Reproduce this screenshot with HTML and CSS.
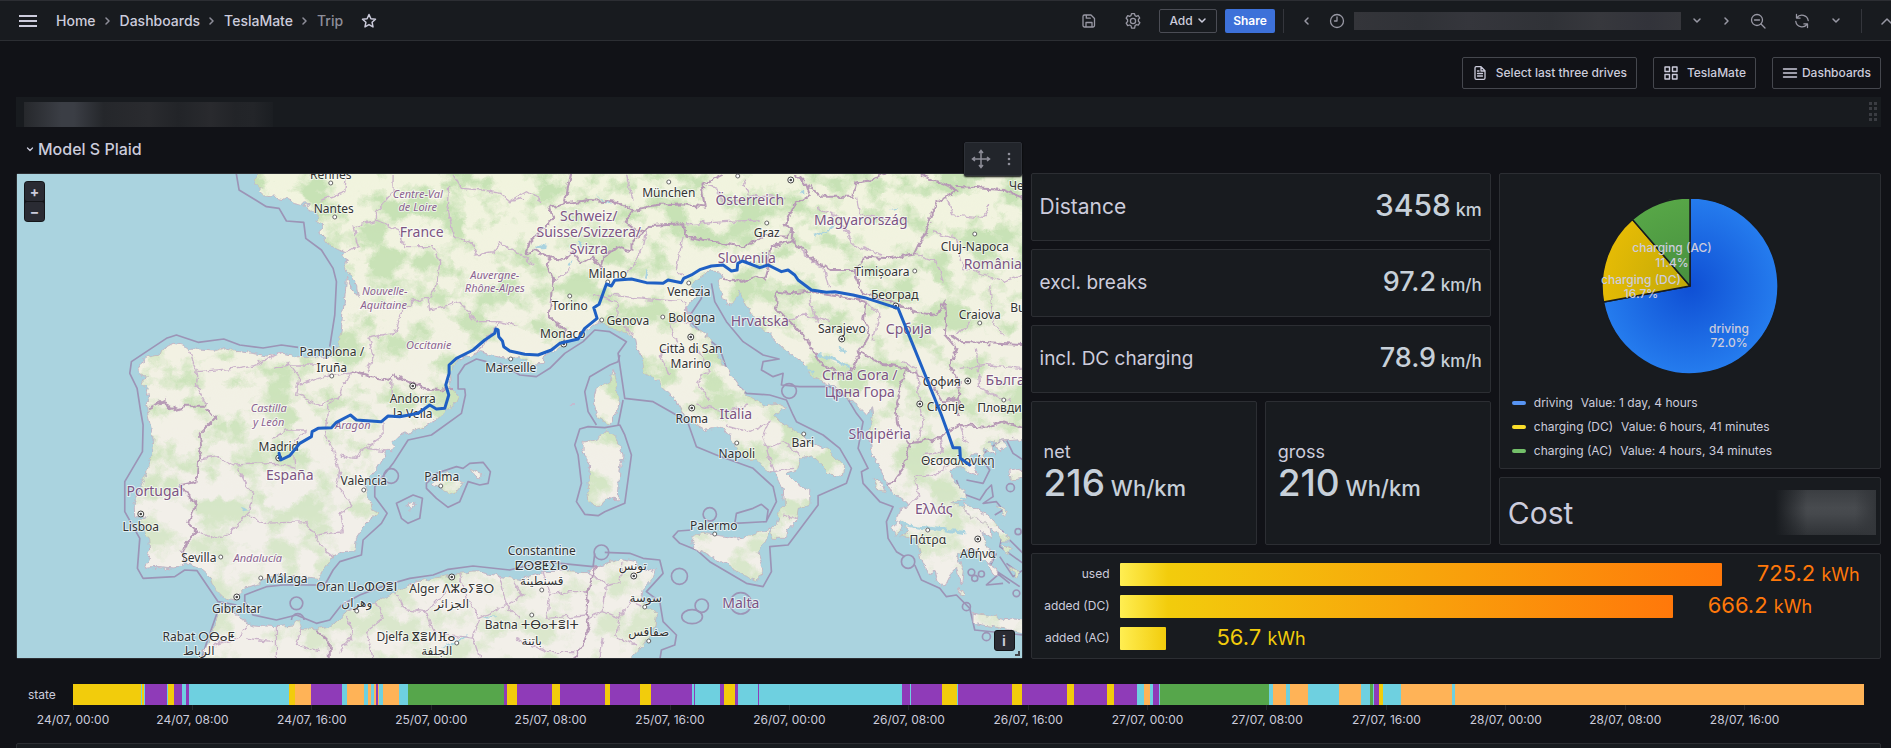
FILE: index.html
```html
<!DOCTYPE html>
<html lang="en">
<head>
<meta charset="utf-8">
<title>Trip - TeslaMate - Dashboards</title>
<link rel="stylesheet" href="styles.css">
</head>
<body>
<header class="topbar">
  <button class="icon-btn menu-btn" aria-label="Open menu"><svg width="20" height="14" viewBox="0 0 20 14"><path d="M1 2h18M1 7h18M1 12h18" stroke-width="2"/></svg></button>
  <nav class="crumbs" aria-label="Breadcrumbs">
    <a href="#">Home</a><svg class="sep" width="6" height="10" viewBox="0 0 6 10"><path d="M1 2l3 3-3 3" stroke-width="1.500"/></svg>
    <a href="#">Dashboards</a><svg class="sep" width="6" height="10" viewBox="0 0 6 10"><path d="M1 2l3 3-3 3" stroke-width="1.500"/></svg>
    <a href="#">TeslaMate</a><svg class="sep" width="6" height="10" viewBox="0 0 6 10"><path d="M1 2l3 3-3 3" stroke-width="1.500"/></svg>
    <span class="current">Trip</span>
  </nav>
  <button class="icon-btn star-btn" aria-label="Mark as favorite"><svg width="16" height="16" viewBox="0 0 16 16"><path d="M8 1.5l1.9 4.2 4.6.5-3.4 3.1.9 4.6L8 11.6l-4 2.3.9-4.6L1.500 6.200l4.600-.5z" stroke-width="1.500"/></svg></button>
  <div class="tools">
    <button class="icon-btn tool" aria-label="Save dashboard"><svg width="16" height="16" viewBox="0 0 16 16"><path d="M3.500 2h6.500l3.500 3.500v7a1.500 1.500 0 0 1-1.500 1.500H3.500A1.500 1.500 0 0 1 2 12.500v-9A1.500 1.500 0 0 1 3.500 2zM5.300 2v3.200h4M5 14v-4.500h6V14" stroke-width="1.300"/></svg></button>
    <button class="icon-btn tool" aria-label="Dashboard settings"><svg width="18" height="18" viewBox="0 0 18 18"><circle cx="9" cy="9" r="2.600" stroke-width="1.300"/><path stroke-width="1.300" d="M7.500 1.700h3l.5 2 1.300.600 1.900-.8 1.500 2.500-1.300 1.400v1.900l1.500 1.400-1.600 2.500-2-.5-1.200.9-.5 2.600h-3l-.6-2.500-1.300-.7-2 .6-1.500-2.500 1.400-1.600V7.700L2.200 6.200l1.500-2.500 1.900.700 1.400-.7z"/></svg></button>
    <button class="add-btn">Add <svg width="10" height="8" viewBox="0 0 10 8"><path d="M2 2l3 3 3-3" stroke-width="1.500"/></svg></button>
    <button class="share-btn">Share</button>
    <span class="divider"></span>
    <button class="icon-btn narrow" aria-label="Move time range back"><svg width="8" height="12" viewBox="0 0 8 12"><path d="M6 3L3 6l3 3" stroke-width="1.500"/></svg></button>
    <button class="range-btn" aria-label="Time range"><svg width="16" height="16" viewBox="0 0 16 16"><circle cx="8" cy="8" r="6.500" stroke-width="1.300"/><path d="M8 4v4H5.500" stroke-width="1.300"/></svg><span class="redacted-range"></span><svg width="10" height="8" viewBox="0 0 10 8"><path d="M2 2l3 3 3-3" stroke-width="1.500"/></svg></button>
    <button class="icon-btn narrow" aria-label="Move time range forward"><svg width="8" height="12" viewBox="0 0 8 12"><path d="M2 3l3 3-3 3" stroke-width="1.500"/></svg></button>
    <button class="icon-btn zoom-out" aria-label="Zoom out time range"><svg width="16" height="16" viewBox="0 0 16 16"><circle cx="7" cy="7" r="5.500" stroke-width="1.300"/><path d="M4.500 7h5M11 11l4 4" stroke-width="1.300"/></svg></button>
    <button class="icon-btn refresh" aria-label="Refresh"><svg width="16" height="16" viewBox="0 0 16 16"><path d="M2.800 4.800A6.300 6.300 0 0 1 14.200 7.500M13.200 11.200A6.300 6.300 0 0 1 1.800 8.500M2.500 1.500v3.600h3.600M13.500 14.500v-3.600h-3.600" stroke-width="1.300"/></svg></button>
    <button class="icon-btn interval" aria-label="Refresh interval"><svg width="10" height="8" viewBox="0 0 10 8"><path d="M2 2l3 3 3-3" stroke-width="1.500"/></svg></button>
    <span class="divider"></span>
    <button class="icon-btn collapse" aria-label="Hide top bar"><svg width="12" height="10" viewBox="0 0 12 10"><path d="M1 8l5-5 5 5" stroke-width="1.500"/></svg></button>
  </div>
</header>

<main class="page">
  <nav class="dash-links" aria-label="Dashboard links">
    <a class="dash-link" href="#"><svg width="16" height="16" viewBox="0 0 16 16"><path d="M4 1.700h5L13 5.700v7.300a1.300 1.300 0 0 1-1.300 1.300H4.300A1.300 1.300 0 0 1 3 13V3a1.300 1.300 0 0 1 1-1.300zM9 2v4h4M5.500 8.500h5M5.500 11h5M5.500 6h1.500" stroke-width="1.300"/></svg>Select last three drives</a>
    <a class="dash-link" href="#"><svg width="16" height="16" viewBox="0 0 16 16"><path d="M2 2h4.500v4.500H2zM9.500 2H14v4.500H9.500zM2 9.500h4.500V14H2zM9.500 9.500H14V14H9.500z" stroke-width="1.400"/></svg>TeslaMate</a>
    <a class="dash-link tight" href="#"><svg width="16" height="16" viewBox="0 0 16 16"><path d="M1.500 4h13M1.500 8h13M1.500 12h13" stroke-width="1.400"/></svg>Dashboards</a>
  </nav>

  <div class="var-row">
    <span class="redacted-var"></span>
    <svg class="grip" width="10" height="20" viewBox="0 0 10 20"><path d="M1 0h3v3H1zM6 0h3v3H6zM1 5h3v3H1zM6 5h3v3H6zM1 11h3v3H1zM6 11h3v3H6zM1 16h3v3H1zM6 16h3v3H6z"/></svg>
  </div>

  <div class="grid">
    <h1 class="row-title"><button><svg width="8" height="8" viewBox="0 0 8 8"><path d="M1.500 3L4 5.500 6.500 3" stroke-width="1.300"/></svg>Model S Plaid</button></h1>

    <section class="panel map-panel" aria-label="Trip map">
      <svg class="map" viewBox="17 174 1005 484" preserveAspectRatio="xMidYMid slice">
        <defs>
          <filter id="rough" filterUnits="userSpaceOnUse" x="10" y="165" width="1020" height="500">
            <feTurbulence type="fractalNoise" baseFrequency="0.13" numOctaves="3" seed="4" result="n"/>
            <feDisplacementMap in="SourceGraphic" in2="n" scale="7" xChannelSelector="R" yChannelSelector="G"/>
          </filter>
          <filter id="forest" filterUnits="userSpaceOnUse" x="10" y="165" width="1020" height="500" color-interpolation-filters="sRGB">
            <feTurbulence type="fractalNoise" baseFrequency="0.03 0.036" numOctaves="6" seed="12"/>
            <feColorMatrix values="0 0 0 0 0.77  0 0 0 0 0.88  0 0 0 0 0.70  5 0 0 0 -2.300"/>
          </filter>
          <linearGradient id="soil" gradientUnits="userSpaceOnUse" x1="0" y1="520" x2="0" y2="1500">
            <stop offset="0" stop-color="#f1f4de"/><stop offset=".55" stop-color="#f2f1e3"/><stop offset="1" stop-color="#f2efe9"/>
          </linearGradient>
          <linearGradient id="fade" gradientUnits="userSpaceOnUse" x1="0" y1="520" x2="0" y2="1975">
            <stop offset="0" stop-color="#f4f4f4"/><stop offset=".45" stop-color="#d0d0d0"/><stop offset=".75" stop-color="#909090"/><stop offset="1" stop-color="#808080"/>
          </linearGradient>
          <g id="land">
            <path d="M795 500L768 540 765 557 785 560 775 573 790 587 830 592 860 598 885 608 905 613 935 610 915 620 935 630 960 650 945 660 968 675 960 695 985 730 1010 745 1035 755 1030 770 1040 785 1035 805 1045 817 1070 855 1076 892 1060 870 1040 835 1037 875 1030 935 1025 985 1015 1045 985 1073 940 1070 895 1070 850 1060 800 1068 760 1060 715 1055 675 1043 650 1051 600 1047 565 1048 550 1035 520 1030 488 1047 480 1065 445 1073 415 1095 420 1120 440 1130 430 1150 445 1165 440 1185 455 1185 440 1207 440 1215 447 1255 460 1315 455 1365 435 1435 410 1490 400 1515 402 1545 418 1552 425 1535 440 1555 420 1565 440 1600 447 1615 450 1655 437 1705 470 1702 520 1707 555 1685 590 1695 630 1730 640 1760 670 1790 700 1800 712 1790 735 1765 780 1750 830 1725 900 1730 955 1735 975 1705 1000 1670 1030 1655 1065 1652 1070 1615 1100 1570 1140 1540 1115 1525 1100 1475 1095 1455 1130 1405 1160 1355 1185 1340 1180 1325 1200 1305 1260 1285 1310 1260 1335 1235 1365 1215 1375 1190 1355 1165 1352 1115 1365 1090 1400 1070 1440 1055 1480 1067 1520 1075 1560 1070 1590 1093 1630 1090 1635 1067 1670 1045 1690 1035 1730 1017 1750 995 1775 977 1800 965 1830 985 1880 995 1905 1015 1910 1045 1925 1075 1930 1115 1970 1140 2010 1180 2030 1205 2060 1255 2120 1290 2170 1280 2195 1315 2230 1375 2270 1380 2300 1410 2330 1420 2350 1465 2355 1515 2335 1545 2330 1575 2315 1595 2320 1615 2360 1615 2365 1590 2390 1560 2395 1525 2430 1515 2430 1470 2390 1450 2360 1420 2390 1410 2400 1375 2435 1365 2470 1395 2500 1425 2530 1430 2535 1400 2490 1355 2430 1325 2400 1305 2340 1265 2320 1245 2360 1225 2330 1210 2290 1215 2230 1175 2180 1105 2140 1045 2120 1005 2075 975 2060 925 2090 885 2075 855 2100 835 2130 815 2165 820 2170 835 2155 845 2170 895 2185 920 2205 905 2220 870 2230 895 2250 935 2280 980 2320 1015 2360 1055 2410 1085 2430 1125 2470 1145 2510 1165 2560 1205 2590 1235 2600 1245 2615 1220 2620 1255 2605 1305 2615 1365 2645 1415 2660 1445 2680 1480 2720 1505 2730 1520 2700 1525 2690 1560 2710 1570 2730 1590 2700 1610 2750 1615 2770 1690 2790 1725 2805 1710 2815 1745 2835 1760 2855 1720 2870 1705 2885 1755 2890 1715 2875 1665 2900 1645 2930 1655 2970 1695 2980 1675 2960 1625 2940 1590 2975 1615 2970 1575 2920 1545 2880 1515 2850 1510 2900 1500 2895 1480 2870 1455 2850 1415 2875 1395 2900 1415 2935 1425 2910 1370 2930 1360 2960 1385 2950 1345 2990 1365 2975 1335 2960 1330 3010 1320 3080 1315 3080 500z"/>
            <path d="M600 1985L630 1915 650 1865 660 1840 690 1830 712 1840 725 1860 760 1875 830 1880 880 1875 900 1860 905 1885 950 1890 990 1880 1040 1835 1080 1820 1130 1805 1190 1775 1230 1755 1300 1735 1380 1720 1440 1715 1500 1730 1560 1738 1630 1715 1710 1713 1760 1715 1800 1695 1870 1677 1910 1685 1915 1705 1940 1715 1970 1705 1960 1735 1930 1765 1925 1795 1940 1825 1970 1840 1965 1875 1950 1905 1930 1935 1890 1985z"/>
            <path d="M1750 1330L1790 1320 1820 1290 1850 1310 1870 1365 1860 1415 1855 1500 1820 1495 1795 1520 1770 1505 1765 1445 1770 1395 1750 1355z"/>
            <path d="M1840 1105L1848 1135 1855 1195 1850 1235 1825 1275 1795 1255 1780 1205 1790 1165 1835 1145z"/>
            <path d="M2075 1615L2110 1600 2150 1605 2210 1615 2270 1600 2315 1587 2295 1625 2275 1655 2290 1705 2275 1740 2230 1725 2190 1700 2130 1665 2080 1645z"/>
            <path d="M2920 1840L2960 1845 3010 1855 3080 1860 3080 1900 3010 1885 2920 1870z"/>
            <path d="M1295 1450L1340 1420 1387 1450 1360 1485 1320 1465zM1412 1408L1450 1425 1442 1437 1418 1422zM1218 1515L1246 1503 1236 1530zM2620 1438l25 10 12 30-18-8zM2675 1580l22-20 10 30-20 15zM2900 1510l80 50 50 60-20 0-60-55-60-30zM2985 1330l30-10 5 20-22 15zM3030 1410l30-5 10 30-35 5zM2990 1515l30 20-10 12zM3005 1630l30 20-15 14zM2960 1690l25 10 10 25-15-5zM3030 1700l28 14-8 20zM2880 1765l12 20-12 5z"/>
          </g>
          <mask id="landMask" maskUnits="userSpaceOnUse" x="10" y="165" width="1020" height="500"><use href="#land" transform="scale(.33333)" fill="url(#fade)"/></mask>
          <g id="capital"><circle r="3" fill="#fff" stroke="#444" stroke-width="1"/><circle r="1.300" fill="#444"/></g>
          <circle id="town" r="2" fill="#fff" stroke="#666" stroke-width="1"/>
        </defs>
        <rect x="0" y="160" width="1100" height="520" fill="#aad3df"/>

        <g class="sea-lines" transform="scale(.33333)">
          <path d="M706 500L718 570 800 620 838 625 860 663 912 667 918 715 965 750 1000 805 1010 845 1005 945 990 1040M895 1042L845 1035 790 1044 720 1035 672 1017 595 1027 530 1005 500 1015 440 1055 395 1085 390 1120 412 1165 422 1230 430 1275 428 1355 375 1445 375 1535 420 1615 413 1705 430 1735 525 1730 555 1710 592 1712 655 1805 710 1815M655 1830L620 1930 605 1980"/>
          <path d="M1460 1085L1430 1077 1395 1095 1375 1125 1375 1167 1395 1167 1397 1185 1385 1240 1295 1305 1225 1320 1180 1390 1125 1460 1125 1490 1162 1540 1145 1570 1090 1620 1085 1665 1020 1685 1000 1710 975 1755 850 1755 800 1760 735 1785 735 1805 760 1845 830 1860 890 1845 950 1870 990 1860 1025 1815 1080 1785 1160 1755 1230 1735 1300 1725 1345 1708 1420 1698 1530 1710 1630 1685 1780 1700 1785 1660M1815 1657L1890 1660 1930 1675 1980 1680 1990 1720 1940 1775 1980 1805 1990 1865 2030 1905 2025 1935 1985 1950 1980 1980"/>
          <path d="M1500 1090L1560 1125 1610 1130 1650 1105 1695 1060 1750 1025 1785 990 1830 995 1880 1025 1855 1060 1875 1195 1960 1205 2030 1245 2065 1270 2090 1340 2150 1365 2260 1405 2320 1460 2330 1505 2300 1563M2380 1245L2360 1200 2310 1185 2240 1180 2190 1135 2160 1045 2105 1000 2065 955 2105 895 2105 865M2380 1245L2390 1265 2470 1305 2520 1345 2555 1405 2540 1450 2455 1487 2455 1515 2365 1635 2310 1640 2315 1715 2290 1760 2240 1750 2130 1685 2090 1650 2040 1630 2020 1610 2035 1593 2075 1590M2300 1565L2205 1570 2210 1540 2260 1525 2285 1513 2305 1530z"/>
          <path d="M2135 850L2145 905 2180 965 2230 1025 2290 1065 2338 1077 2290 1085 2285 1110 2320 1130 2350 1120 2345 1155 2400 1160 2490 1160 2540 1190 2570 1240 2590 1265 2575 1345 2605 1405 2585 1415 2590 1450 2640 1505 2680 1520 2660 1565 2665 1615 2690 1655 2715 1670M2745 1695L2765 1740 2820 1765 2840 1790 2870 1785 2910 1825 2925 1890 3070 1905M1765 1280L1815 1283 1860 1275 1875 1305 1895 1365 1875 1510 1815 1535 1795 1547 1755 1543 1730 1505 1745 1450 1735 1365 1725 1335 1740 1287zM1790 1275L1765 1235 1755 1175 1770 1130 1830 1095 1855 1085 1860 1065M1855 1275L1870 1200"/>
          <path d="M1280 1450L1310 1420 1370 1400 1390 1405 1410 1390 1450 1387 1472 1415 1465 1450 1440 1455 1405 1445 1380 1505 1345 1522 1310 1495 1280 1465zM1190 1510L1240 1485 1268 1495 1260 1555 1225 1570 1205 1555zM2870 1440L2885 1480 2940 1500 2960 1470 2975 1455 2980 1490 2950 1510 2990 1505 3010 1530 2985 1545M2900 1440L2950 1450 2970 1410 2940 1370 2990 1330 3020 1320 3040 1360 3070 1380M2950 1560L3010 1595 3000 1640 3070 1690M2990 1660L2970 1700 3060 1760M3010 1750L2960 1755 3000 1720M3030 1620L3070 1660M3000 1670l40 60 30-20M2980 1710l50 40M3020 1690l40 30"/>
          <circle cx="890" cy="1810" r="19"/><path d="M875 1860a19 19 0 0 1 38 0"/><circle cx="1174" cy="1428" r="22"/><circle cx="2130" cy="1543" r="20"/><circle cx="2039" cy="1729" r="24"/><circle cx="2106" cy="1817" r="20"/><ellipse cx="2077" cy="1850" rx="31" ry="21"/><circle cx="2223" cy="1810" r="32"/><circle cx="1805" cy="1657" r="22"/><circle cx="2725" cy="1685" r="20"/><circle cx="2368" cy="1173" r="22"/><circle cx="2915" cy="1717" r="10"/><circle cx="2945" cy="1722" r="9"/><circle cx="2900" cy="1820" r="12"/><circle cx="2960" cy="1910" r="12"/><circle cx="3055" cy="1595" r="9"/><circle cx="3032" cy="1463" r="12"/><circle cx="3050" cy="1780" r="10"/><circle cx="2925" cy="1735" r="9"/>
        </g>

        <g filter="url(#rough)">
          <use href="#land" transform="scale(.33333)" fill="url(#soil)" stroke="#c3b4c4" stroke-width="3"/>
          <g mask="url(#landMask)"><rect x="10" y="165" width="1020" height="500" filter="url(#forest)"/></g>
          <g class="lakes" transform="scale(.33333)">
            <path d="M2440 705l40-14 24-18-10 16-50 22zM1600 745l25-12 18 4-12 8zM1790 585l44 26-10 2zM2670 630l25-12-4 8zM1935 838l6-30 8 2-8 30zM1700 795l22-18-12 20zM1735 722l14 4-8 12zM2400 580l12-16 2 14zM1330 1940l60-30 20-5-60 36zM1450 1852l40-4-20 8zM720 1520l30 10-20 4z"/>
            <path d="M2700 1570L2760 1582 2840 1590 2900 1598" fill="none" stroke="#aad3df" stroke-width="9"/>
            <path d="M2880 1490l70 30 60 50M2520 1040l20 18M2450 1060l60 22 40 24M2360 1060l80 60" fill="none" stroke="#aad3df" stroke-width="7"/>
          </g>
          <g class="region-lines" transform="scale(.33333)">
            <g transform="translate(0 495)">
              <path d="M1180 30V80L1130 140V165L1195 195 1215 245 1300 245 1320 290 1310 370 1285 400 1290 435 1340 425 1375 410 1430 470 1500 470 1560 485M1350 60L1345 130 1360 210 1420 240 1430 270 1480 260 1500 235 1560 265M1130 165L1060 185 1075 245 1035 260M1285 400L1240 405 1200 450 1190 500 1105 520 1120 570 1100 625M1360 30L1385 70 1450 75 1500 85 1530 110 1570 100M1040 30L1035 80 965 105M1430 560L1460 530 1500 470M1560 265L1600 300"/>
              <path d="M570 560L585 600 595 620 590 660 620 720M595 620L700 610 760 600 840 565M820 610L870 595 900 640 890 690 960 720 1000 700M900 660L960 640 1050 618 1015 700 985 720M1175 640L1180 720M880 600L960 600"/>
            </g>
            <g transform="translate(0 1215)">
              <path d="M600 165L650 155 700 180 830 175 885 190 880 110 920 75M820 100L860 75 920 75M715 190L740 240 760 260 750 320 740 330 690 385 660 400 590 380M740 330L790 355 920 350 950 400 980 440 1000 455M1000 130L1020 200 1010 240 1060 300 1020 330 1030 380 950 390M985 0L975 90 1000 130M1150 50V90L1100 130 1060 160 1020 150M1100 130L1180 140"/>
              <path d="M830 665L830 760M740 660L720 700 640 720M740 700L820 710M905 670L890 720 960 740M1040 630L1060 690 1020 740M1130 590L1150 640 1100 680 1120 760M1190 560L1210 610 1280 620 1340 560M1280 620L1300 680 1420 700 1440 640 1400 580 1380 505M1440 640L1520 600M1420 700L1440 760M1500 515L1520 600 1560 640"/>
            </g>
            <g transform="translate(1530 405)">
              <path d="M130 440L180 400M300 480L400 490 520 500M250 480L320 500 330 560M330 560L370 600M410 290L400 340 350 420M520 305L500 400 530 430M520 500L560 560 480 560M480 560L500 620 450 660 480 720M560 640L600 700 560 740 600 800M350 120L370 200M0 200L50 170 100 200M580 150L620 160 640 200 700 200M530 270L640 260 750 255M700 140L720 180 830 190M870 350L940 400 960 460M1000 270L1030 330 1120 360M920 220L980 240 1000 270M1040 185L1050 240 1200 260M1310 185L1330 240 1420 250 1440 210M1270 290L1340 310 1360 400 1480 440 1536 420M1215 355L1280 380 1300 440M1380 560L1340 600M1440 450L1450 560 1480 600M1070 500L1110 540 1090 620M1180 680L1220 700 1230 800M820 560L880 540 960 560M900 480L920 560M1350 700L1440 690 1536 700M1400 640L1410 760 1500 800"/>
            </g>
            <g transform="translate(1530 1215)">
              <path d="M560 0L640 20 720 0M650 60L720 80 780 50 760 100 770 130 820 110 870 150M770 130L790 200 850 190M820 330L860 345M1230 0L1240 60 1220 110M1210 215L1270 210 1320 180M1290 90L1300 140 1240 150M1350 60L1370 110M1215 220L1230 270 1200 300M10 530L40 570 0 600M100 500L120 570 180 560 235 560M230 500L290 540 330 530 340 470M290 540L280 620 330 640 360 590 410 610M330 640L320 700 380 720M230 640L280 620M120 570L110 640 230 630M20 700L110 740 200 740M280 700L270 760M180 0L190 0"/>
            </g>
          </g>
          <g class="state-lines" transform="scale(.33333)">
            <g transform="translate(0 495)"><path d="M1050 618L1110 635 1170 645 1180 630 1240 655 1285 675 1360 672M445 730L470 718 495 705 510 735 560 722 620 722"/></g>
            <g transform="translate(0 1215)"><path d="M620 10L645 40 600 85 605 130 595 165 590 230 545 240 565 275 590 295 565 355 590 380 560 410 550 440 555 470M950 675L990 710 990 780"/></g>
            <g transform="translate(1530 405)"><path d="M50 360L75 345 120 370 115 400 130 430 125 470 120 550 165 580 165 630M50 360L60 320 130 250 120 215 165 205 240 195 320 200 370 225 345 260 385 290 410 285 420 270 520 265M120 370L165 375 190 350 215 385 250 365 275 400 285 365 320 335 365 350 365 320 410 285M165 205L185 110M370 225L440 210 520 205 585 215 575 150 640 118M520 265L530 305 700 335 770 300 830 305 850 280 825 270 855 210 900 180 890 150 860 120M900 155L935 185 1030 185 1040 140 1100 130 1140 105M1230 118L1310 150 1340 165 1310 185 1280 200 1250 280 1215 355 1140 370 1070 365 1035 405 1040 430 1060 480 1110 490 1215 530 1280 540 1305 500 1310 540 1305 600 1340 640 1320 690 1350 740 1345 840M1340 155L1480 165 1540 190M850 280L845 315 905 370 960 405 1035 405M640 435L700 440 740 425 765 435 775 400 780 340 845 315M800 470L850 475 900 470 980 480 1070 500 1060 550 1080 600 1050 650 1030 700 1000 720 940 690 880 600 800 520zM1320 600L1350 620 1540 630M1050 650L1120 690 1190 700 1170 760 1160 810M1190 700L1260 740 1300 800 1345 790"/></g>
            <g transform="translate(1530 1215)"><path d="M1160 0L1165 60 1200 115 1180 190 1150 230 1130 235M1200 115L1270 105 1350 60 1430 65 1480 50 1540 70M260 480L235 560 230 620 240 660 220 720 190 770"/></g>
          </g>
        </g>

        <g class="country">
          <text x="422" y="237">France</text><text x="750" y="205">Österreich</text><text x="589" y="221">Schweiz/</text><text x="589" y="237">Suisse/Svizzera/</text><text x="589" y="254">Svizra</text><text x="861" y="225">Magyarország</text><text x="993" y="269">România</text><text x="747" y="263">Slovenija</text><text x="760" y="326">Hrvatska</text><text x="909" y="334">Србија</text><text x="860" y="380">Crna Gora /</text><text x="860" y="397">Црна Гора</text><text x="1018" y="385">България</text><text x="736" y="419">Italia</text><text x="880" y="439">Shqipëria</text><text x="934" y="514">Ελλάς</text><text x="741" y="608">Malta</text><text x="290" y="480">España</text><text x="155" y="496">Portugal</text>
        </g>
        <g class="region">
          <text x="418" y="198">Centre-Val</text><text x="418" y="211">de Loire</text><text x="495" y="279">Auvergne-</text><text x="495" y="292">Rhône-Alpes</text><text x="385" y="295">Nouvelle-</text><text x="384" y="309">Aquitaine</text><text x="429" y="349">Occitanie</text><text x="269" y="412">Castilla</text><text x="269" y="426">y León</text><text x="353" y="429">Aragón</text><text x="258" y="562">Andalucía</text>
        </g>
        <g class="city">
          <text x="331" y="179">Rennes</text><text x="334" y="213">Nantes</text><text x="332" y="356">Pamplona /</text><text x="332" y="372">Iruña</text><text x="413" y="403">Andorra</text><text x="413" y="418">la Vella</text><text x="511" y="372">Marseille</text><text x="669" y="197">München</text><text x="767" y="237">Graz</text><text x="975" y="251">Cluj-Napoca</text><text x="1034" y="190">Чернівці</text><text x="608" y="278">Milano</text><text x="882" y="276">Timișoara</text><text x="895" y="299">Београд</text><text x="689" y="296">Venezia</text><text x="570" y="310">Torino</text><text x="628" y="325">Genova</text><text x="692" y="322">Bologna</text><text x="563" y="338">Monaco</text><text x="691" y="353">Città di San</text><text x="691" y="368">Marino</text><text x="842" y="333">Sarajevo</text><text x="980" y="319">Craiova</text><text x="1037" y="312">București</text><text x="942" y="386">София</text><text x="946" y="411">Скопје</text><text x="1003" y="412">Пловдив</text><text x="692" y="423">Roma</text><text x="803" y="447">Bari</text><text x="737" y="458">Napoli</text><text x="958" y="465">Θεσσαλονίκη</text><text x="928" y="544">Πάτρα</text><text x="978" y="558">Αθήνα</text><text x="714" y="530">Palermo</text><text x="542" y="555">Constantine</text><text x="542" y="570">ⵇⵙⵓⵟⵉⵏⴰ</text><text x="542" y="585">قسنطينة</text><text x="633" y="570">تونس</text><text x="646" y="602">سوسة</text><text x="649" y="636">صفاقس</text><text x="532" y="629">Batna ⵜⴱⴰⵜⴻⵏⵜ</text><text x="532" y="645">باتنة</text><text x="279" y="451">Madrid</text><text x="364" y="485">València</text><text x="442" y="481">Palma</text><text x="141" y="531">Lisboa</text><text x="199" y="562">Sevilla</text><text x="287" y="583">Málaga</text><text x="237" y="613">Gibraltar</text><text x="357" y="591">Oran ⵡⴰⵀⵔⴻⵏ</text><text x="357" y="607">وهران</text><text x="452" y="593">Alger ⴷⵣⴰⵢⴻⵔ</text><text x="452" y="608">الجزائر</text><text x="416" y="641">Djelfa ⴵⴻⵍⴼⴰ</text><text x="437" y="655">الجلفة</text><text x="199" y="641">Rabat ⵔⴱⴰⵟ</text><text x="199" y="655">الرباط</text>
        </g>
        <g>
          <use href="#town" x="331" y="183"/><use href="#town" x="335" y="217"/><use href="#town" x="332" y="376"/><use href="#town" x="511" y="359"/><use href="#town" x="669" y="182"/><use href="#town" x="738" y="176"/><use href="#town" x="767" y="223"/><use href="#town" x="975" y="234"/><use href="#town" x="608" y="282"/><use href="#town" x="915" y="271"/><use href="#town" x="689" y="283"/><use href="#town" x="570" y="296"/><use href="#town" x="602" y="320"/><use href="#town" x="663" y="317"/><use href="#town" x="980" y="323"/><use href="#town" x="1004" y="400"/><use href="#town" x="804" y="434"/><use href="#town" x="737" y="443"/><use href="#town" x="928" y="530"/><use href="#town" x="715" y="534"/><use href="#town" x="542" y="590"/><use href="#town" x="645" y="607"/><use href="#town" x="649" y="641"/><use href="#town" x="532" y="615"/><use href="#town" x="364" y="490"/><use href="#town" x="441" y="486"/><use href="#town" x="221" y="557"/><use href="#town" x="261" y="578"/><use href="#town" x="357" y="611"/><use href="#town" x="457" y="643"/>
          <use href="#capital" x="413" y="386"/><use href="#capital" x="791" y="180"/><use href="#capital" x="896" y="306"/><use href="#capital" x="564" y="344"/><use href="#capital" x="691" y="337"/><use href="#capital" x="842" y="339"/><use href="#capital" x="968" y="381"/><use href="#capital" x="920" y="404"/><use href="#capital" x="692" y="408"/><use href="#capital" x="978" y="539"/><use href="#capital" x="634" y="576"/><use href="#capital" x="141" y="514"/><use href="#capital" x="237" y="597"/><use href="#capital" x="452" y="577"/><use href="#capital" x="279" y="458"/>
        </g>
        <path class="route" transform="scale(.33333)" d="M838 1360L843 1380 870 1367 900 1330 935 1310 937 1295 955 1285 995 1283 1010 1267 1052 1245 1070 1260 1145 1265 1165 1248 1200 1250 1255 1240 1290 1215 1310 1227 1335 1225 1347 1185 1338 1155 1348 1120 1348 1095 1370 1075 1420 1050 1455 1020 1485 1000 1488 987 1495 990 1497 1010 1508 1023 1512 1040 1530 1053 1575 1063 1615 1065 1655 1050 1680 1030 1735 1017 1755 985 1792 955 1782 923 1798 913 1820 852 1835 858 1845 841 1895 837 1940 848 1990 850 2005 840 2045 848 2052 835 2075 825 2100 809 2135 798 2170 795 2195 813 2212 810 2214 790 2228 783 2280 803 2305 795 2345 815 2365 810 2385 825 2395 840 2435 870 2480 877 2505 875 2560 885 2595 893 2695 925 2825 1245 2845 1300 2860 1343 2880 1343 2882 1375 2910 1395"/>
      </svg>
      <div class="map-zoom"><button aria-label="Zoom in">+</button><button aria-label="Zoom out">−</button></div>
      <button class="map-info" aria-label="Map attribution">i</button>
      <span class="resize-handle"></span>
      <div class="hover-menu">
        <svg width="20" height="20" viewBox="0 0 20 20"><path d="M10 2v16M2 10h16M8 4l2-2.500L12 4M8 16l2 2.500 2-2.500M4 8l-2.500 2L4 12M16 8l2.500 2-2.500 2"/></svg>
        <button aria-label="Panel menu"><svg width="4" height="14" viewBox="0 0 4 14"><circle cx="2" cy="2" r="1.300"/><circle cx="2" cy="7" r="1.300"/><circle cx="2" cy="12" r="1.300"/></svg></button>
      </div>
    </section>

    <section class="panel stat s1"><span class="label big">Distance</span><span class="value big">3458<small> km</small></span></section>
    <section class="panel stat s2"><span class="label">excl. breaks</span><span class="value">97.2<small> km/h</small></span></section>
    <section class="panel stat s3"><span class="label">incl. DC charging</span><span class="value">78.9<small> km/h</small></span></section>
    <section class="panel energy net"><span class="name">net</span><span class="amount">216<small> Wh/km</small></span></section>
    <section class="panel energy gross"><span class="name">gross</span><span class="amount">210<small> Wh/km</small></span></section>

    <section class="panel pie-panel">
      <svg class="pie" width="190" height="190" viewBox="-95 -95 190 190">
        <defs>
          <radialGradient id="pb" gradientUnits="userSpaceOnUse" cx="0" cy="0" r="88"><stop offset="0" stop-color="#0f4fd4"/><stop offset="1" stop-color="#257cee"/></radialGradient>
          <radialGradient id="py" gradientUnits="userSpaceOnUse" cx="0" cy="0" r="88"><stop offset="0" stop-color="#c0a807"/><stop offset="1" stop-color="#e5bb05"/></radialGradient>
          <radialGradient id="pg" gradientUnits="userSpaceOnUse" cx="0" cy="0" r="88"><stop offset="0" stop-color="#478f3e"/><stop offset="1" stop-color="#57a647"/></radialGradient>
        </defs>
        <g stroke="#181b1f" stroke-width="1.500" stroke-linejoin="round">
          <path d="M0 0V-88A88 88 0 1 1-86.500 16z" fill="url(#pb)"/>
          <path d="M0 0L-86.500 16A88 88 0 0 1-57.500-66.500z" fill="url(#py)"/>
          <path d="M0 0L-57.500-66.500A88 88 0 0 1 0-88z" fill="url(#pg)"/>
        </g>
        <g class="pie-label"><text x="-18" y="-34">charging (AC)</text><text x="-18" y="-19">11.4%</text><text x="-49" y="-2">charging (DC)</text><text x="-49" y="12">16.7%</text><text x="39" y="47">driving</text><text x="39" y="61">72.0%</text></g>
      </svg>
      <ul class="legend">
        <li><i class="swatch blue"></i><span>driving</span><span>Value: 1 day, 4 hours</span></li>
        <li><i class="swatch yellow"></i><span>charging (DC)</span><span>Value: 6 hours, 41 minutes</span></li>
        <li><i class="swatch green"></i><span>charging (AC)</span><span>Value: 4 hours, 34 minutes</span></li>
      </ul>
    </section>

    <section class="panel cost"><span class="cost-label">Cost</span><span class="redacted-cost"></span></section>

    <section class="panel gauges">
      <div class="gauge"><span class="gauge-label">used</span><div class="track"><span class="bar" style="width:80.9%"></span><span class="gauge-value">725.2 <small>kWh</small></span></div></div>
      <div class="gauge"><span class="gauge-label">added (DC)</span><div class="track"><span class="bar" style="width:74.3%"></span><span class="gauge-value">666.2 <small>kWh</small></span></div></div>
      <div class="gauge low"><span class="gauge-label">added (AC)</span><div class="track"><span class="bar" style="width:6.3%"></span><span class="gauge-value">56.7 <small>kWh</small></span></div></div>
    </section>

    <section class="timeline">
      <span class="timeline-label">state</span>
      <div class="timeline-plot">
        <div class="states" id="states"></div>
        <div class="axis"><span>24/07, 00:00</span><span>24/07, 08:00</span><span>24/07, 16:00</span><span>25/07, 00:00</span><span>25/07, 08:00</span><span>25/07, 16:00</span><span>26/07, 00:00</span><span>26/07, 08:00</span><span>26/07, 16:00</span><span>27/07, 00:00</span><span>27/07, 08:00</span><span>27/07, 16:00</span><span>28/07, 00:00</span><span>28/07, 08:00</span><span>28/07, 16:00</span></div>
      </div>
    </section>
    <section class="panel next-panel"></section>
  </div>
</main>
<script src="states.js"></script>
</body>
</html>
```
FILE: styles.css
```css
* { box-sizing: border-box; }
body { margin: 0; background: #111217; color: #ccccdc; font: 14px/20px Inter, "Liberation Sans", sans-serif; height: 100vh; overflow: hidden; }
button { font: inherit; color: inherit; background: none; border: 0; padding: 0; cursor: pointer; }
a { color: inherit; text-decoration: none; }
svg { display: block; }

.topbar { display: flex; align-items: center; height: 41px; padding-left: 18px; background: #181b1f; border-top: 1px solid #2c2e33; border-bottom: 1px solid #2c2e33; overflow: hidden; }
.topbar svg, .dash-link svg, .row-title svg { fill: none; stroke: currentColor; stroke-linecap: round; stroke-linejoin: round; }
.icon-btn { display: flex; justify-content: center; align-items: center; flex: none; }
.menu-btn svg { stroke-linecap: butt; }
.crumbs { display: flex; align-items: center; gap: 9px; margin-left: 18px; font-weight: 500; }
.crumbs .sep, .crumbs .current { color: #8e8e99; }
.star-btn { margin-left: 18px; }
.tools { display: flex; align-items: center; margin-left: auto; color: #9898a4; }
.tool { width: 44px; }
.add-btn, .share-btn { height: 24px; border-radius: 2px; font-size: 12px; font-weight: 500; color: #ccccdc; }
.add-btn { display: flex; align-items: center; justify-content: center; gap: 4px; width: 58px; border: 1px solid #4b4d55; margin-left: 4px; }
.share-btn { width: 50px; margin: 0 8px; background: #3d71d9; color: #fff; font-weight: 600; }
.divider { width: 1px; height: 24px; background: #34363c; }
.narrow { width: 16px; }
.tools .narrow { margin-left: 14px; }
.range-btn { display: flex; align-items: center; margin-left: 15px; }
.redacted-range { width: 327px; height: 18px; margin: 0 11px 0 9px; background: linear-gradient(90deg, #34353a, #303237 20%, #35363c 35%, #303237 60%, #37383d 75%, #32333a 90%, #36373c); }
.tools .range-btn + .narrow { margin-left: 17px; }
.zoom-out { width: 16px; margin-left: 15px; }
.refresh { width: 16px; margin-left: 28px; }
.interval { width: 10px; margin: 0 20px 0 21px; }
.collapse { width: 12px; margin: 0 -2px 0 19px; }

.page { padding: 16px 10px 0 16px; }
.dash-links { display: flex; justify-content: flex-end; gap: 16px; margin-bottom: 8px; }
.dash-link { display: flex; align-items: center; gap: 8px; height: 32px; padding: 0 9px; border: 1px solid #45474e; border-radius: 2px; font-size: 12px; font-weight: 500; }
.dash-link.tight { gap: 4px; }
.var-row { display: flex; justify-content: space-between; align-items: flex-end; height: 30px; margin-bottom: 8px; padding: 0 3px 0 8px; background: #181b1f; }
.redacted-var { width: 249px; height: 25px; background: linear-gradient(90deg, #26282c, #3b3e45 15%, #3b3e45 20%, #25272b 32%, #2a2b2f 50%, #222428 62%, #292a2e 75%, #222428 85%, #232529 92%, #1b1e22); }
.grip { fill: #3a3c42; align-self: center; }

.grid { display: grid; grid-template-columns: repeat(24, minmax(0, 1fr)); grid-auto-rows: 30px; gap: 8px; }
.row-title { grid-area: 1 / 1 / 2 / 25; display: flex; align-items: flex-start; margin: 0 0 0 10px; font-size: 16px; font-weight: 500; line-height: 28px; }
.row-title button { display: flex; align-items: center; gap: 4px; }
.panel { background: #181b1f; border: 1px solid #2c2e33; border-radius: 2px; min-width: 0; min-height: 0; }
.map-panel { grid-area: 2 / 1 / 15 / 14; position: relative; }
.s1 { grid-area: 2 / 14 / 4 / 20; }
.s2 { grid-area: 4 / 14 / 6 / 20; }
.s3 { grid-area: 6 / 14 / 8 / 20; }
.net { grid-area: 8 / 14 / 12 / 17; }
.gross { grid-area: 8 / 17 / 12 / 20; }
.pie-panel { grid-area: 2 / 20 / 10 / 25; }
.cost { grid-area: 10 / 20 / 12 / 25; }
.gauges { grid-area: 12 / 14 / 15 / 25; }
.timeline { grid-area: 15 / 1 / 17 / 25; }
.next-panel { grid-area: 17 / 1 / 18 / 25; }

.map { width: 100%; height: 100%; }
.map text { font-family: "Noto Sans", "DejaVu Sans", sans-serif; text-anchor: middle; paint-order: stroke; stroke: rgba(255, 255, 255, .65); stroke-width: 2px; stroke-linejoin: round; }
.map .city text { font-size: 12px; fill: #333; }
.map .country text { font-size: 14px; fill: #7c5483; }
.map .region text { font-size: 11px; font-style: italic; fill: #8b6390; }
.sea-lines { fill: none; stroke: #9c94b6; stroke-width: 5; stroke-linejoin: round; }
.region-lines { fill: none; stroke: #cbb3ca; stroke-width: 4; }
.state-lines { fill: none; stroke: #b79ab6; stroke-width: 6; }
.lakes { fill: #aad3df; }
.route { fill: none; stroke: #1f60c4; stroke-width: 9; stroke-linejoin: round; stroke-linecap: round; }
.map-zoom { position: absolute; left: 7px; top: 7px; display: flex; flex-direction: column; gap: 1px; padding: 1px; background: #141519; border-radius: 4px; }
.map-zoom button { width: 19px; height: 19px; background: #2a2b33; font: 700 14px/18px Inter, sans-serif; border-radius: 2px; }
.map-info { position: absolute; right: 7px; bottom: 7px; width: 21px; height: 21px; background: #2a2b33; border: 1px solid #141519; border-radius: 3px; font: 700 14px/18px "Liberation Sans", sans-serif; }
.resize-handle { position: absolute; right: 2px; bottom: 2px; width: 5px; height: 5px; border-right: 2px solid #44474b; border-bottom: 2px solid #44474b; }
.hover-menu { position: absolute; right: 0; top: -32px; display: flex; align-items: center; gap: 16px; height: 34px; padding: 0 10px 0 6px; background: #22252b; border: 1px solid #2e3138; border-radius: 2px; box-shadow: 0 1px 2px #000; color: #8e8e99; }
.hover-menu svg { fill: none; stroke: currentColor; stroke-width: 1.5; }
.hover-menu button svg { fill: currentColor; stroke: none; }

.stat { display: flex; align-items: center; justify-content: space-between; padding: 0 8px; }
.stat .label { font-size: 19px; }
.stat .label.big { font-size: 21px; }
.value { font-size: 27px; font-weight: 500; line-height: 32px; color: #c7d0d9; }
.value.big { font-size: 30px; }
.value small { font-size: 17px; }
.value.big small { font-size: 18px; }
.energy { display: flex; flex-direction: column; justify-content: center; padding: 1px 12px 0; }
.energy .name { font-size: 18px; line-height: 24px; }
.energy .amount { font-size: 37px; font-weight: 500; line-height: 38px; color: #c7d0d9; }
.energy small { font-size: 22px; }

.pie-panel { display: flex; flex-direction: column; align-items: center; justify-content: space-between; padding: 17px 12px 7px; }
.pie-label text { font: 500 12px Inter, sans-serif; fill: #ccccdc; text-anchor: middle; }
.legend { align-self: stretch; list-style: none; margin: 0; padding: 0; font-size: 12px; line-height: 20px; display: grid; row-gap: 4px; }
.legend li { display: flex; align-items: center; gap: 8px; }
.swatch { width: 14px; height: 4px; border-radius: 2px; }
.swatch.blue { background: #5794f2; }
.swatch.yellow { background: #fade2a; }
.swatch.green { background: #73bf69; }

.cost { display: flex; align-items: center; justify-content: space-between; padding: 3px 4px 0 8px; }
.cost-label { font-size: 30px; line-height: 36px; }
.redacted-cost { width: 106px; height: 45px; background: linear-gradient(90deg, #181b1f 5%, transparent 35%), linear-gradient(270deg, #33363a, transparent 20%), linear-gradient(180deg, #3b3e42, #484b4f 40%, #45484c 55%, #303337); }

.gauges { display: grid; grid-template-rows: repeat(3, 23px); row-gap: 9px; align-content: center; padding: 0 16px 0 12px; }
.gauge { display: grid; grid-template-columns: 66px minmax(0, 1fr); column-gap: 10px; align-items: center; }
.gauge-label { font-size: 12px; text-align: right; }
.track { display: flex; align-items: center; height: 23px; }
.bar { height: 100%; flex: none; border-radius: 1px; background: linear-gradient(90deg, #ffee52, #f2cc0c 48px, #ff780a); }
.low .bar { background: linear-gradient(90deg, #ffee52, #f2cc0c); }
.gauge-value { padding-left: 35px; font-size: 22px; line-height: 23px; color: #ff780a; white-space: nowrap; }
.gauge-value small { font-size: 18px; }
.low .gauge-value { padding-left: 50px; color: #f2cc0c; }

.timeline { display: grid; grid-template-columns: 57px minmax(0, 1fr); padding: 17px 17px 0 0; font-size: 12px; }
.timeline-label { padding-left: 12px; line-height: 21px; }
.states { display: flex; height: 21px; }
.axis { display: grid; grid-template-columns: repeat(15, minmax(0, 1fr)); margin-left: calc(100% / -30); margin-right: calc(100% / 30); }
.axis span { text-align: center; line-height: 16px; white-space: nowrap; }
.axis span::before { content: ""; display: block; width: 1px; height: 5px; margin: 0 auto 2px; background: #25272c; }
.state-y { background: #f2cc0c; }
.state-p { background: #8f3bb8; }
.state-c { background: #6ed0e0; }
.state-o { background: #ffb357; }
.state-g { background: #56a64b; }
```
FILE: states.js
```js
// Vehicle states over the period: [state, duration share]
const states = 'y167 c2 y5 c2 p54 c3 y14 p20 c10 p7 c245 y16 o38 p76 c12 o42 c10 o8 c6 o5 p5 o3 c9 o40 c22 g235 p7 y25 p85 y20 p110 y12 p74 y27 p101 c5 p2 c61 p10 y27 p8 c49 p2 c350 p20 c2 p76 y38 c2 p132 y24 p111 y17 p81 y17 p56 c17 o15 c7 p15 c2 g267 c10 o32 c10 o44 c76 o53 c23 g6 c3 p13 y10 c44 o124 c8 o1002';

const strip = document.getElementById('states');
for (const item of states.split(' ')) {
  const segment = document.createElement('span');
  segment.className = 'state-' + item[0];
  segment.style.flex = item.slice(1) + ' 0 0';
  strip.append(segment);
}
```
